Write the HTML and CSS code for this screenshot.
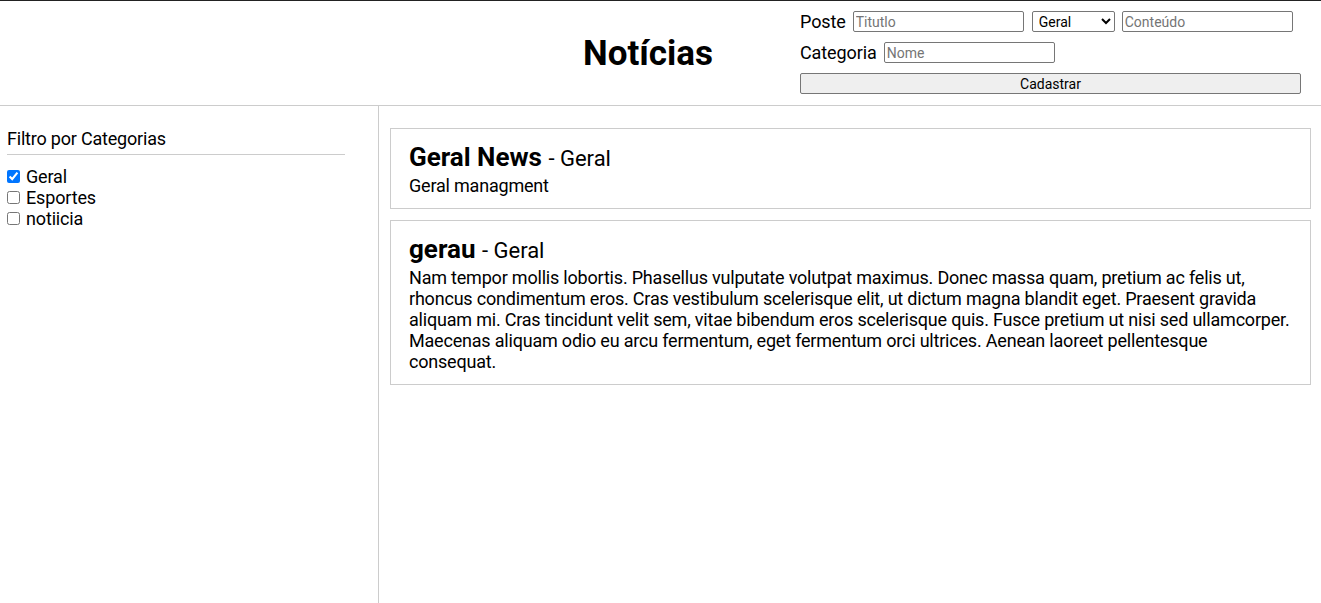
FILE: index.html
```html
<!DOCTYPE html>
<html lang="pt">
<head>
<meta charset="utf-8">
<title>Notícias</title>
<link rel="stylesheet" href="styles.css">
</head>
<body>
<header class="header">
  <h1 class="title">Notícias</h1>
  <form class="form">
    <div class="row">
      <label class="label">Poste</label>
      <input class="field" type="text" placeholder="Titutlo">
      <select class="select"><option>Geral</option><option>Esportes</option><option>notiicia</option></select>
      <input class="field" type="text" placeholder="Conteúdo">
    </div>
    <div class="row">
      <label class="label">Categoria</label>
      <input class="field" type="text" placeholder="Nome">
    </div>
    <button class="btn" type="button">Cadastrar</button>
  </form>
</header>
<div class="main">
  <aside class="sidebar">
    <h3 class="filter-title">Filtro por Categorias</h3>
    <ul class="filter-list">
      <li class="filter-item"><input type="checkbox" class="check" checked><span>Geral</span></li>
      <li class="filter-item"><input type="checkbox" class="check"><span>Esportes</span></li>
      <li class="filter-item"><input type="checkbox" class="check"><span>notiicia</span></li>
    </ul>
  </aside>
  <section class="content">
    <article class="card">
      <h2 class="card-title">Geral News <span class="card-cat">- Geral</span></h2>
      <p class="card-text">Geral managment</p>
    </article>
    <article class="card">
      <h2 class="card-title">gerau <span class="card-cat">- Geral</span></h2>
      <p class="card-text">Nam tempor mollis lobortis. Phasellus vulputate volutpat maximus. Donec massa quam, pretium ac felis ut, rhoncus condimentum eros. Cras vestibulum scelerisque elit, ut dictum magna blandit eget. Praesent gravida aliquam mi. Cras tincidunt velit sem, vitae bibendum eros scelerisque quis. Fusce pretium ut nisi sed ullamcorper. Maecenas aliquam odio eu arcu fermentum, eget fermentum orci ultrices. Aenean laoreet pellentesque consequat.</p>
    </article>
  </section>
</div>
</body>
</html>
```

FILE: styles.css
```css
html, body {
  margin: 0;
  padding: 0;
  background: #fff;
  color: #000;
  font-family: Roboto, "Noto Sans", Arial, sans-serif;
}

.header {
  box-sizing: border-box;
  height: 106px;
  display: flex;
  align-items: center;
  justify-content: flex-end;
  gap: 87px;
  padding: 0 20px 0 0;
  border-top: 1px solid #222;
  border-bottom: 1px solid #ccc;
}

.title {
  margin: 0;
  font-size: 35px;
  font-weight: 700;
}

.form {
  width: 501px;
  display: flex;
  flex-direction: column;
  gap: 10px;
  margin-top: -1px;
}

.row {
  display: flex;
  align-items: center;
  gap: 8px;
  height: 21px;
}

.label {
  font-size: 18px;
  letter-spacing: -0.1px;
  margin-right: -1px;
}

.field,
.select {
  box-sizing: border-box;
  height: 21px;
  font-family: Roboto, "Noto Sans", Arial, sans-serif;
  font-size: 14px;
  border: 1px solid #767676;
  border-radius: 2px;
  padding: 0 2px;
  background: #fff;
  color: #000;
}

.field {
  width: 171px;
}

.field::placeholder {
  color: #757575;
}

.select {
  width: 83px;
  padding: 0 0 0 2px;
  margin-right: -1px;
}

.btn {
  box-sizing: border-box;
  width: 100%;
  height: 21px;
  font-family: Roboto, "Noto Sans", Arial, sans-serif;
  font-size: 14px;
  background: #efefef;
  border: 1px solid #767676;
  border-radius: 2px;
  color: #000;
  padding: 0;
}

.main {
  display: flex;
  height: calc(100vh - 106px);
}

.sidebar {
  box-sizing: border-box;
  width: 379px;
  flex: none;
  border-right: 1px solid #ccc;
  padding: 22px 7px 0 7px;
}

.filter-title {
  width: 338px;
  margin: 0;
  font-size: 18px;
  font-weight: 400;
  line-height: 21px;
  letter-spacing: -0.2px;
  padding-bottom: 5px;
  border-bottom: 1px solid #ccc;
}

.filter-list {
  list-style: none;
  margin: 11px 0 0 0;
  padding: 0;
}

.filter-item {
  display: flex;
  align-items: center;
  height: 21px;
  font-size: 18px;
  letter-spacing: -0.15px;
}

.check {
  margin: 0 6px 0 0;
  width: 13px;
  height: 13px;
}

.content {
  flex: 1;
  display: flex;
  flex-direction: column;
  gap: 11px;
  padding: 22px 10px 0 11px;
}

.card {
  border: 1px solid #ccc;
  padding: 13px 18px 12px;
}

.card-title {
  margin: 0 0 3px;
  font-size: 26px;
  font-weight: 700;
  line-height: normal;
}

.card-cat {
  font-size: 22px;
  font-weight: 400;
}

.card-text {
  margin: 0;
  font-size: 18px;
  line-height: 21px;
  letter-spacing: -0.2px;
}
```
